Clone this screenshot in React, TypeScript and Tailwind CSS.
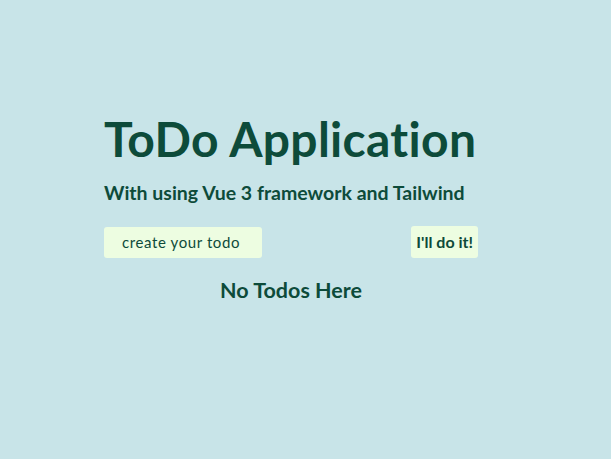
export default function App() {
  return (
    <div className="min-h-screen bg-[#c8e4e8] text-[#0d4b3a]" style={{ fontFamily: 'Lato, "Open Sans", sans-serif' }}>
      <div className="ml-[104px] w-[374px] pt-[110px] flex flex-col">
        <h1 className="text-[48px] leading-[58px] font-bold tracking-[0.3px]">ToDo Application</h1>
        <p className="mt-[13px] text-[19.5px] leading-[24px] font-bold">With using Vue 3 framework and Tailwind</p>
        <div className="mt-[21px] flex items-center justify-between">
          <input
            type="text"
            placeholder="create your todo"
            className="w-[158px] h-[31px] rounded-[3px] bg-[#edfde1] px-[18px] text-[15px] tracking-[0.6px] placeholder:text-[#0d4b3a] outline-none"
          />
          <button className="h-[32px] px-[5px] rounded-[3px] bg-[#edfde1] text-[16px] font-bold">I'll do it!</button>
        </div>
        <p className="mt-[18px] text-center text-[21.5px] leading-[28px] font-bold">No Todos Here</p>
      </div>
    </div>
  );
}
